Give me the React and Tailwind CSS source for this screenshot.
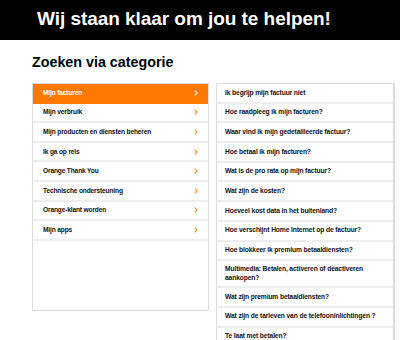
import React from "react";

const categories = [
  "Mijn facturen",
  "Mijn verbruik",
  "Mijn producten en diensten beheren",
  "Ik ga op reis",
  "Orange Thank You",
  "Technische ondersteuning",
  "Orange-klant worden",
  "Mijn apps",
];

const questions = [
  "Ik begrijp mijn factuur niet",
  "Hoe raadpleeg ik mijn facturen?",
  "Waar vind ik mijn gedetailleerde factuur?",
  "Hoe betaal ik mijn facturen?",
  "Wat is de pro rata op mijn factuur?",
  "Wat zijn de kosten?",
  "Hoeveel kost data in het buitenland?",
  "Hoe verschijnt Home Internet op de factuur?",
  "Hoe blokkeer ik premium betaaldiensten?",
  "Multimedia: Betalen, activeren of deactiveren aankopen?",
  "Wat zijn premium betaaldiensten?",
  "Wat zijn de tarieven van de telefooninlichtingen ?",
  "Te laat met betalen?",
];

function Chevron({ white }) {
  return (
    <svg width="4" height="6" viewBox="0 0 4 6" className="shrink-0">
      <path d="M0.8 0.6 L3.2 3 L0.8 5.4" fill="none" stroke={white ? "#ffffff" : "#ff8f33"} strokeWidth="1.1" />
    </svg>
  );
}

export default function App() {
  return (
    <div className="w-[400px] h-[340px] overflow-hidden bg-white font-['Liberation_Sans',Arial,sans-serif]">
      <div className="h-10 bg-black pl-[37px] flex items-center">
        <h1 className="text-white text-[19px] font-bold leading-none tracking-[-0.05px] -mt-[3px]">Wij staan klaar om jou te helpen!</h1>
      </div>

      <div className="pl-8 pr-[5px]">
        <h2 className="mt-[14px] text-[14.3px] font-bold leading-[16px] text-black">Zoeken via categorie</h2>

        <div className="mt-[13px] flex items-start gap-[7px]">
          <div className="w-[177px] h-[228px] border border-[#dcdcdc] bg-white">
            {categories.map((c, i) => (
              <div
                key={c}
                className={
                  "h-[19.6px] flex items-center justify-between pl-[10px] pr-[10px] border-b-2 " +
                  (i === 0 ? "bg-[#ff7900] border-[#ff7900] text-white" : "border-[#eeeeee] text-[#111]")
                }
              >
                <span className="text-[6.6px] font-bold tracking-[-0.15px]">{c}</span>
                <Chevron white={i === 0} />
              </div>
            ))}
          </div>

          <div className="w-[179px] border border-[#dcdcdc] border-r-2 bg-white">
            {questions.map((q) => (
              <div
                key={q}
                className="min-h-[19.7px] flex items-center pl-[8px] pr-[12px] py-[4px] border-b-2 border-[#eeeeee]"
              >
                <span className="text-[6.7px] leading-[8.5px] font-bold tracking-[-0.12px] text-[#111]">{q}</span>
              </div>
            ))}
          </div>
        </div>
      </div>
    </div>
  );
}
